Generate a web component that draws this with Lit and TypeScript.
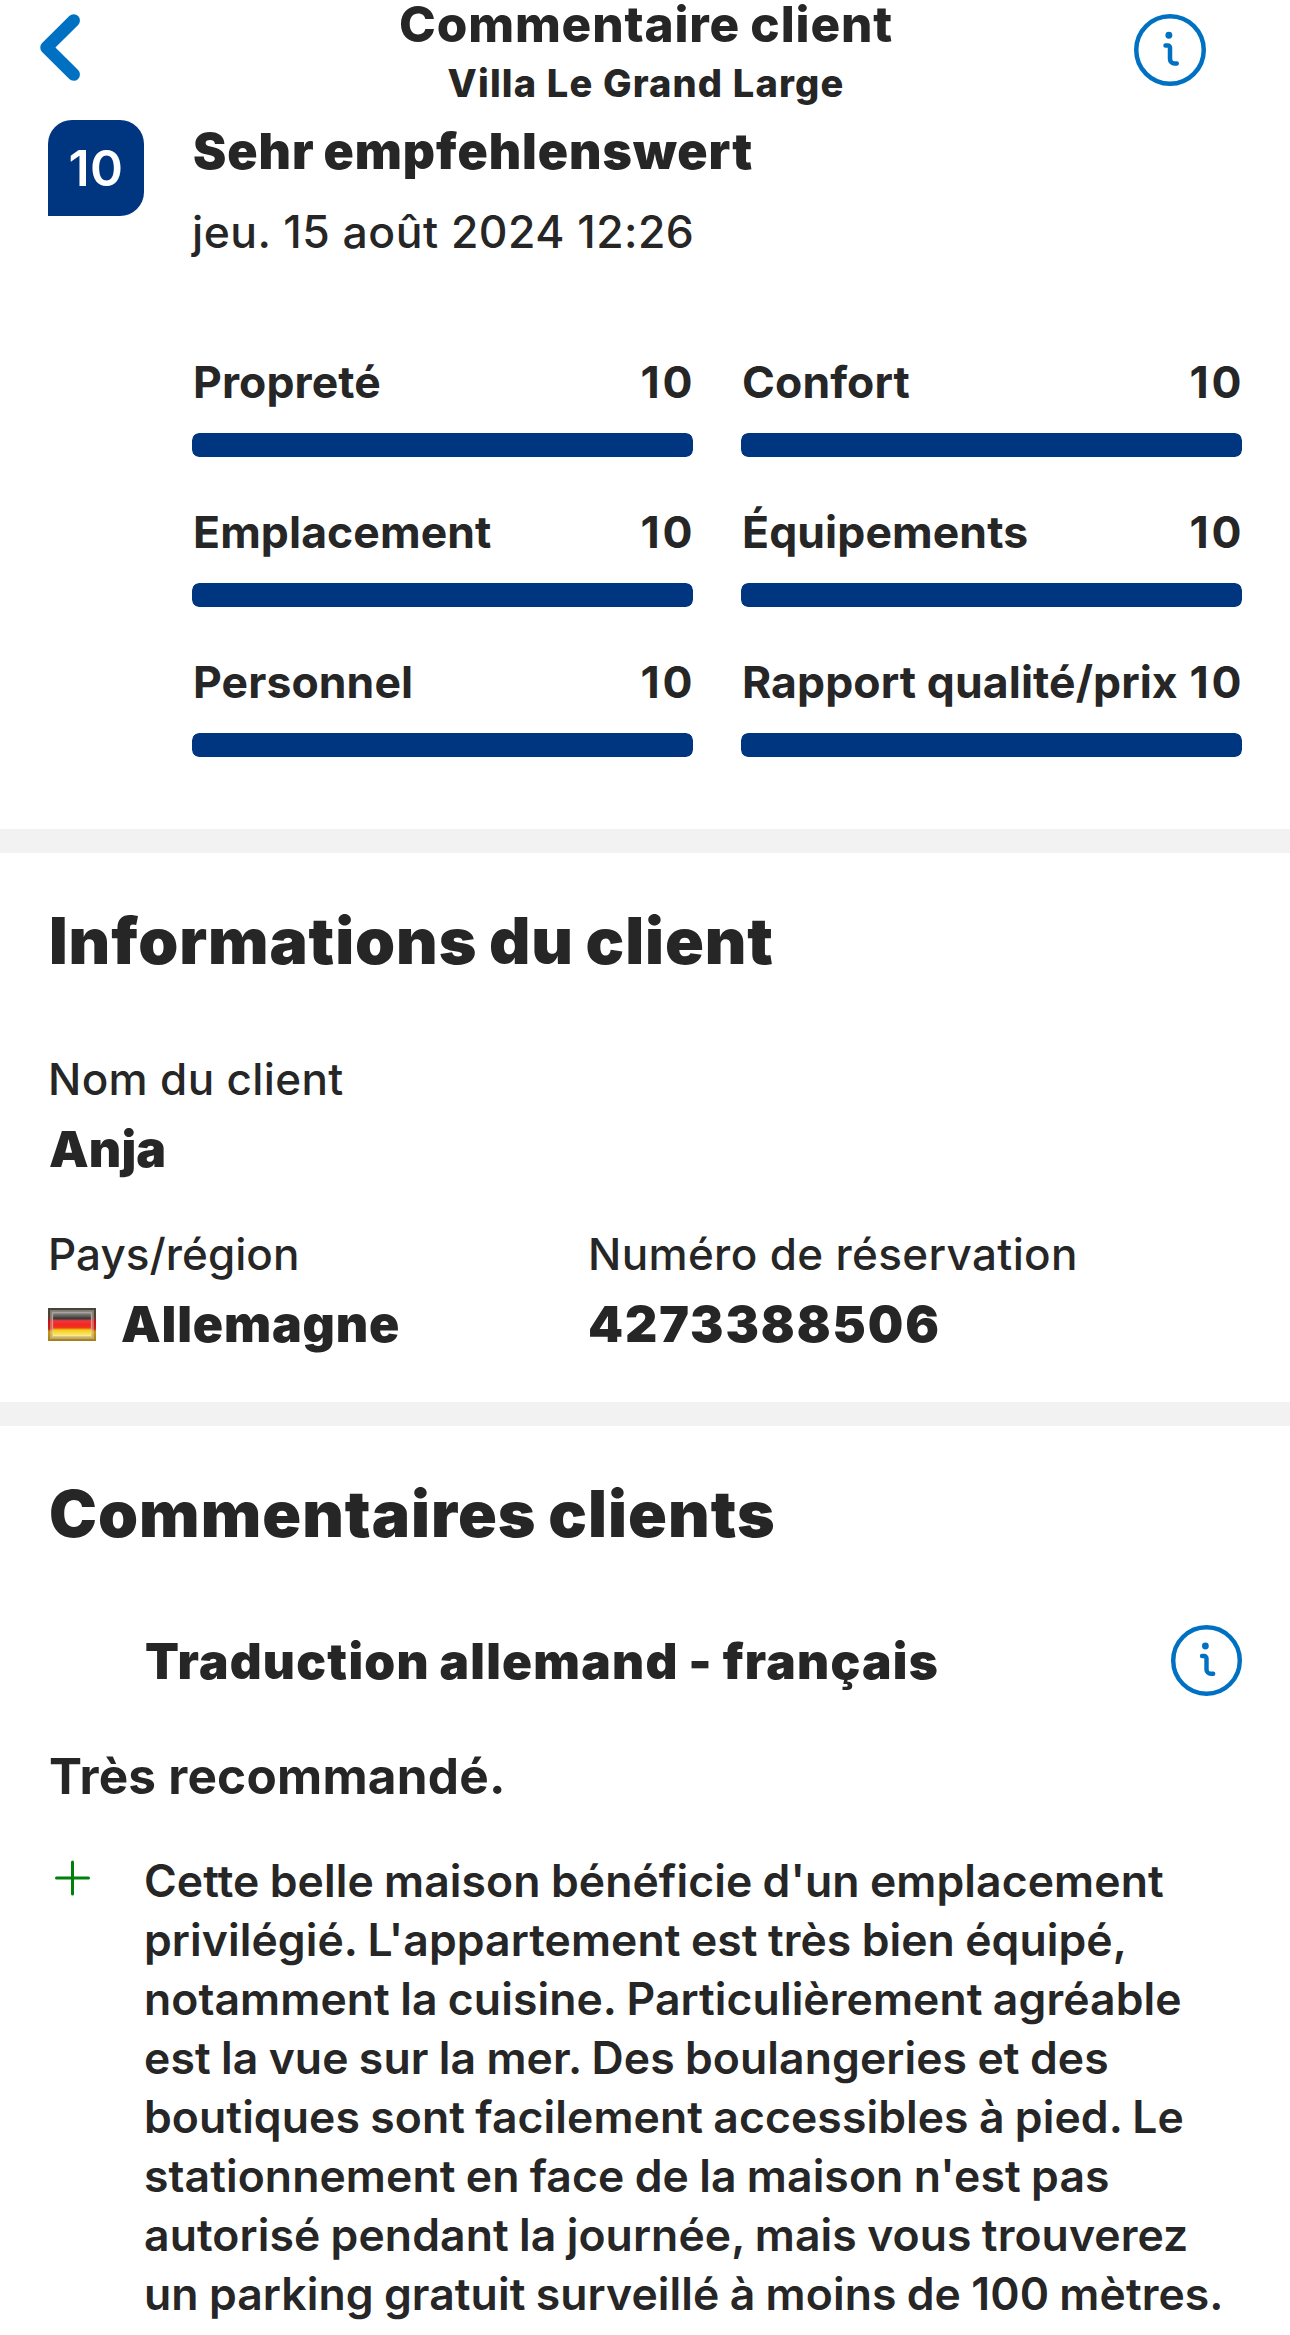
import { LitElement, html, css, svg } from "lit";
import { customElement, property } from "lit/decorators.js";

interface Rating {
  label: string;
  score: number;
}

const RATINGS: Rating[] = [
  { label: "Propreté", score: 10 },
  { label: "Confort", score: 10 },
  { label: "Emplacement", score: 10 },
  { label: "Équipements", score: 10 },
  { label: "Personnel", score: 10 },
  { label: "Rapport qualité/prix", score: 10 },
];

const REVIEW_LINES: string[] = [
  "Cette belle maison bénéficie d'un emplacement",
  "privilégié. L'appartement est très bien équipé,",
  "notamment la cuisine. Particulièrement agréable",
  "est la vue sur la mer. Des boulangeries et des",
  "boutiques sont facilement accessibles à pied. Le",
  "stationnement en face de la maison n'est pas",
  "autorisé pendant la journée, mais vous trouverez",
  "un parking gratuit surveillé à moins de 100 mètres.",
];

@customElement("info-icon")
class InfoIcon extends LitElement {
  static styles = css`
    :host {
      display: block;
      width: 72px;
      height: 72px;
      color: #0071c2;
    }
    .icon {
      display: block;
      width: 100%;
      height: 100%;
    }
  `;

  render() {
    return html`<svg class="icon" viewBox="0 0 24 24" fill="none" stroke="currentColor" stroke-width="1.5" stroke-linecap="round" stroke-linejoin="round">
      <circle cx="12" cy="12" r="11.25"></circle>
      <path d="M14.25 16.5h-.75A1.5 1.5 0 0 1 12 15v-3.75a.75.75 0 0 0-.75-.75h-.75"></path>
      <circle cx="11.625" cy="7.1" r="1.15" fill="currentColor" stroke="none"></circle>
    </svg>`;
  }
}

@customElement("rating-bar")
class RatingBar extends LitElement {
  @property() label = "";
  @property({ type: Number }) score = 0;

  static styles = css`
    :host {
      display: block;
    }
    .line {
      display: flex;
      justify-content: space-between;
      height: 56px;
      padding-left: 1px;
      font-size: 44.5px;
      font-weight: 700;
      line-height: 56px;
      letter-spacing: 0.1px;
      white-space: nowrap;
    }
    .score {
      letter-spacing: 2.6px;
      margin-right: -2px;
    }
    .track {
      height: 24px;
      margin-top: 23px;
      border-radius: 7px;
      overflow: hidden;
    }
    .fill {
      height: 100%;
      border-radius: 7px;
      background: #003580;
    }
  `;

  render() {
    return html`
      <div class="line"><span>${this.label}</span><span class="score">${this.score}</span></div>
      <div class="track"><div class="fill" style="width:${this.score * 10}%"></div></div>
    `;
  }
}

@customElement("app-root")
class AppRoot extends LitElement {
  static styles = css`
    :host {
      display: block;
      width: 1290px;
      height: 2335px;
      overflow: hidden;
      background: #fff;
      color: #262626;
      font-family: Inter, "Liberation Sans", sans-serif;
      white-space: nowrap;
    }
    .header {
      display: grid;
      grid-template-columns: 156px 1fr 156px;
      height: 120px;
    }
    .back {
      display: block;
      width: 60px;
      height: 96px;
      margin-left: 31px;
    }
    .titles {
      padding-left: 2px;
      text-align: center;
    }
    .title {
      font-size: 49.5px;
      font-weight: 800;
      line-height: 48px;
      letter-spacing: 0.85px;
      word-spacing: -1.5px;
    }
    .subtitle {
      margin-top: 8px;
      font-size: 38px;
      font-weight: 800;
      line-height: 54px;
      letter-spacing: 1.17px;
    }
    .help {
      margin-top: 14px;
    }
    .summary {
      display: flex;
      gap: 48px;
      padding: 0 48px 72px;
    }
    .badge {
      flex: none;
      width: 96px;
      height: 96px;
      border-radius: 24px 24px 24px 0;
      background: #003580;
      color: #fff;
      font-size: 50px;
      font-weight: 600;
      line-height: 96px;
      letter-spacing: 0.4px;
      text-align: center;
    }
    .details {
      flex: 1;
    }
    .verdict {
      margin-left: 1px;
      font-size: 50px;
      font-weight: 900;
      line-height: 62px;
      letter-spacing: 0.95px;
      word-spacing: -2px;
    }
    .date {
      margin-top: 20px;
      font-size: 44.5px;
      font-weight: 500;
      line-height: 60px;
      letter-spacing: 0.47px;
    }
    .ratings {
      display: grid;
      grid-template-columns: 1fr 1fr;
      gap: 47px 48px;
      margin-top: 92px;
    }
    .divider {
      height: 24px;
      background: #f2f2f2;
    }
    .section {
      padding: 48px 48px 0;
    }
    .guest {
      padding-bottom: 48px;
    }
    .heading {
      margin-left: 1px;
      font-size: 64.2px;
      font-weight: 900;
      line-height: 80px;
      letter-spacing: 0.9px;
      word-spacing: -2px;
    }
    .heading-reviews {
      letter-spacing: 1px;
    }
    .fields {
      display: grid;
      grid-template-columns: 540px 1fr;
      row-gap: 47px;
      margin-top: 70px;
    }
    .wide {
      grid-column: 1 / -1;
    }
    .label {
      font-size: 44px;
      font-weight: 500;
      line-height: 56px;
      letter-spacing: 0.36px;
    }
    .region {
      letter-spacing: 0.04px;
    }
    .value {
      display: flex;
      align-items: center;
      gap: 25px;
      height: 60px;
      margin-top: 12px;
      font-size: 50px;
      font-weight: 900;
      line-height: 60px;
      letter-spacing: 0.81px;
    }
    .name {
      padding-left: 1px;
      letter-spacing: 0.1px;
    }
    .number {
      letter-spacing: 1.92px;
    }
    .flag {
      display: block;
      width: 48px;
      height: 33px;
    }
    .translation {
      display: flex;
      justify-content: space-between;
      height: 73px;
      margin-top: 71px;
      padding-left: 97px;
    }
    .translation-title {
      font-size: 49.5px;
      font-weight: 900;
      line-height: 73px;
      letter-spacing: 1.25px;
      word-spacing: -1.5px;
    }
    .translation-help {
      width: 71px;
      height: 71px;
    }
    .headline {
      margin-top: 48px;
      margin-left: 1px;
      font-size: 49.5px;
      font-weight: 700;
      line-height: 60px;
      letter-spacing: 0.22px;
    }
    .review {
      display: flex;
      gap: 48px;
      margin-top: 46px;
    }
    .plus {
      flex: none;
      display: block;
      width: 48px;
      height: 53px;
    }
    .text {
      font-size: 44.5px;
      font-weight: 600;
      line-height: 59px;
      letter-spacing: 0.08px;
      word-spacing: -1px;
    }
    .overflow-line {
      display: block;
      width: 1098px;
      height: 12px;
    }
  `;

  private renderFlag() {
    return svg`<svg class="flag" viewBox="0 0 48 33">
      <defs>
        <linearGradient id="edge" x1="0" y1="0" x2="0" y2="1">
          <stop offset="0" stop-color="#45443a"></stop>
          <stop offset=".3" stop-color="#55402e"></stop>
          <stop offset=".38" stop-color="#c01418"></stop>
          <stop offset=".62" stop-color="#c42414"></stop>
          <stop offset=".72" stop-color="#c8960c"></stop>
          <stop offset="1" stop-color="#a08020"></stop>
        </linearGradient>
        <linearGradient id="face" x1="0" y1="0" x2="0" y2="1">
          <stop offset="0" stop-color="#8c8a86"></stop>
          <stop offset=".24" stop-color="#3a3838"></stop>
          <stop offset=".34" stop-color="#e83c3c"></stop>
          <stop offset=".52" stop-color="#fa2024"></stop>
          <stop offset=".64" stop-color="#e84010"></stop>
          <stop offset=".74" stop-color="#f4cc18"></stop>
          <stop offset="1" stop-color="#fcec80"></stop>
        </linearGradient>
      </defs>
      <rect width="48" height="33" fill="url(#edge)"></rect>
      <rect x="5" y="5" width="38" height="23" fill="url(#face)"></rect>
      <rect x="3.5" y="3.5" width="41" height="26" fill="none" stroke="#fff" stroke-opacity=".3" stroke-width="3"></rect>
      <rect x="4.5" y="4.5" width="39" height="24" fill="none" stroke="#fff" stroke-opacity=".3" stroke-width="1.5"></rect>
    </svg>`;
  }

  render() {
    return html`
      <header class="header">
        <svg class="back" viewBox="0 0 60 96" fill="none" stroke="#0071c2" stroke-width="12.5" stroke-linecap="round" stroke-linejoin="round">
          <path d="M42.7 20.5 15.5 47.5 42.7 74.5"></path>
        </svg>
        <div class="titles">
          <div class="title">Commentaire client</div>
          <div class="subtitle">Villa Le Grand Large</div>
        </div>
        <info-icon class="help"></info-icon>
      </header>

      <section class="summary">
        <div class="badge">10</div>
        <div class="details">
          <div class="verdict">Sehr empfehlenswert</div>
          <div class="date">jeu. 15 août 2024 12:26</div>
          <div class="ratings">
            ${RATINGS.map((r) => html`<rating-bar .label=${r.label} .score=${r.score}></rating-bar>`)}
          </div>
        </div>
      </section>

      <div class="divider"></div>

      <section class="section guest">
        <div class="heading">Informations du client</div>
        <div class="fields">
          <div class="wide">
            <div class="label">Nom du client</div>
            <div class="value name">Anja</div>
          </div>
          <div>
            <div class="label region">Pays/région</div>
            <div class="value">${this.renderFlag()}<span>Allemagne</span></div>
          </div>
          <div>
            <div class="label">Numéro de réservation</div>
            <div class="value number">4273388506</div>
          </div>
        </div>
      </section>

      <div class="divider"></div>

      <section class="section">
        <div class="heading heading-reviews">Commentaires clients</div>
        <div class="translation">
          <div class="translation-title">Traduction allemand - français</div>
          <info-icon class="translation-help"></info-icon>
        </div>
        <div class="headline">Très recommandé.</div>
        <div class="review">
          <svg class="plus" viewBox="0 0 48 53" fill="none" stroke="#008009" stroke-width="3" stroke-linecap="round">
            <path d="M8.5 26h32M24.5 10v32"></path>
          </svg>
          <div>
            <div class="text">${REVIEW_LINES.map((line) => html`<div>${line}</div>`)}</div>
            <svg class="overflow-line" viewBox="0 0 1098 12" fill="#262626">
              <path d="M241 11h5v1h-5zM353 11h5v1h-5z"></path>
              <path fill-opacity=".4" d="M792 11h3v1h-3zM947 11h3v1h-3zM995 11h3v1h-3z"></path>
            </svg>
          </div>
        </div>
      </section>
    `;
  }
}
